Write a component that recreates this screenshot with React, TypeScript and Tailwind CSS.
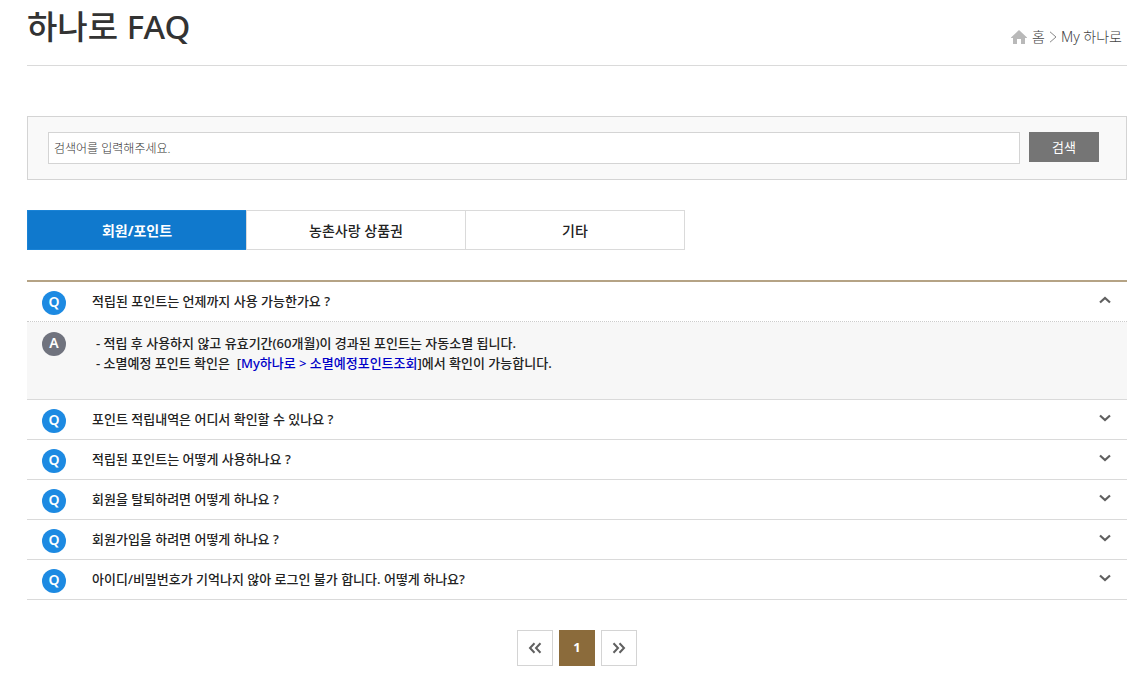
import React, { useState } from "react";

interface FaqItem {
  id: number;
  question: string;
  answer?: React.ReactNode;
}

const tabs = ["회원/포인트", "농촌사랑 상품권", "기타"];

const faqs: FaqItem[] = [
  {
    id: 1,
    question: "적립된 포인트는 언제까지 사용 가능한가요 ?",
    answer: (
      <>
        <p>- 적립 후 사용하지 않고 유효기간(60개월)이 경과된 포인트는 자동소멸 됩니다.</p>
        <p>
          - 소멸예정 포인트 확인은&nbsp; [
          <a href="#point" className="text-[#0000c8]">
            My하나로 &gt; 소멸예정포인트조회
          </a>
          ]에서 확인이 가능합니다.
        </p>
      </>
    ),
  },
  { id: 2, question: "포인트 적립내역은 어디서 확인할 수 있나요 ?" },
  { id: 3, question: "적립된 포인트는 어떻게 사용하나요 ?" },
  { id: 4, question: "회원을 탈퇴하려면 어떻게 하나요 ?" },
  { id: 5, question: "회원가입을 하려면 어떻게 하나요 ?" },
  { id: 6, question: "아이디/비밀번호가 기억나지 않아 로그인 불가 합니다. 어떻게 하나요?" },
];

const Mark: React.FC<{ type: "Q" | "A" }> = ({ type }) => (
  <span
    className={`flex size-6 shrink-0 items-center justify-center rounded-full pb-0.5 text-sm leading-5 font-semibold text-white ${
      type === "Q" ? "bg-[#1d8ae2]" : "bg-[#70737e]"
    }`}
  >
    {type}
  </span>
);

const Chevron: React.FC<{ open: boolean }> = ({ open }) => (
  <svg width="12" height="8" viewBox="0 0 12 8" fill="none" stroke="#606060" strokeWidth="2.2" className="shrink-0">
    <path d={open ? "M1 6.5 6 2l5 4.5" : "M1 1.5 6 6l5-4.5"} />
  </svg>
);

const FaqRow: React.FC<{ item: FaqItem; open: boolean; onToggle: () => void }> = ({ item, open, onToggle }) => {
  const expanded = open && !!item.answer;
  return (
    <li>
      <h2>
        <button
          type="button"
          onClick={onToggle}
          aria-expanded={open}
          className={`flex h-10 w-full items-start border-b pr-4 pl-[15px] text-left ${
            expanded ? "border-dotted border-[#cccccc]" : "border-[#dadada]"
          }`}
        >
          <span className="pt-[9px]">
            <Mark type="Q" />
          </span>
          <span className="flex-1 pl-[26px] leading-[38px]">{item.question}</span>
          <span className="pt-[14px]">
            <Chevron open={open} />
          </span>
        </button>
      </h2>
      {expanded && (
        <div className="flex items-start border-b border-[#dadada] bg-[#f7f7f7] pt-[10px] pb-[26px] pl-[15px]">
          <Mark type="A" />
          <div className="pt-px pl-[30px] leading-5">{item.answer}</div>
        </div>
      )}
    </li>
  );
};

const App: React.FC = () => {
  const [tab, setTab] = useState(0);
  const [openId, setOpenId] = useState(1);
  const [keyword, setKeyword] = useState("");

  return (
    <main className="bg-white pt-[3px] pr-[11px] pb-5 pl-[27px] font-['Noto_Sans','Noto_Sans_CJK_KR',sans-serif] text-[13px] font-medium text-[#222222]">
      <header className="flex items-start justify-between border-b border-[#dadada] pb-[14px]">
        <h1 className="text-[33px] leading-[48px] text-[#333333]">하나로 FAQ</h1>
        <nav aria-label="위치" className="flex items-center gap-1 pt-6 pr-[5px] text-sm font-light text-[#444444]">
          <svg width="16" height="14" viewBox="0 0 16 14" fill="#b9b9b9" className="mr-px">
            <path d="M8 0 0 7.5V8h2v6h4V9h4v5h4V8h2v-.5L8 0Z" />
          </svg>
          <a href="#home">홈</a>
          <svg width="8" height="12" viewBox="0 0 8 12" fill="none" stroke="#888888">
            <path d="M1 .8 7 6l-6 5.2" />
          </svg>
          <a href="#my">My 하나로</a>
        </nav>
      </header>

      <form
        onSubmit={(e) => e.preventDefault()}
        className="mt-[50px] flex items-start gap-[9px] border border-[#d4d4d4] bg-[#f9f9f9] py-[15px] pr-[27px] pl-5"
      >
        <input
          type="text"
          aria-label="검색어"
          value={keyword}
          onChange={(e) => setKeyword(e.target.value)}
          placeholder="검색어를 입력해주세요."
          className="h-8 min-w-0 flex-1 border border-[#d4d4d4] bg-white px-[5px] text-xs font-light placeholder:text-[#333333]"
        />
        <button type="submit" className="h-[30px] w-[70px] bg-[#757575] pt-px text-[13px] font-normal text-white">
          검색
        </button>
      </form>

      <div role="tablist" className="mt-[30px] flex w-3/5 text-sm">
        {tabs.map((name, i) => (
          <button
            key={name}
            type="button"
            role="tab"
            aria-selected={tab === i}
            onClick={() => setTab(i)}
            className={`-ml-px h-10 w-1/3 shrink-0 border pt-0.5 first:ml-0 ${
              tab === i ? "border-[#1a83d6] bg-[#1079cd] font-bold text-white" : "border-[#dadada] bg-white"
            }`}
          >
            {name}
          </button>
        ))}
      </div>

      <ul className="mt-[30px] border-t-2 border-[#b5a385]">
        {faqs.map((item) => (
          <FaqRow
            key={item.id}
            item={item}
            open={openId === item.id}
            onToggle={() => setOpenId(openId === item.id ? 0 : item.id)}
          />
        ))}
      </ul>

      <nav aria-label="페이지" className="mt-[30px] flex justify-center gap-1.5">
        <button
          type="button"
          aria-label="이전"
          className="flex size-9 items-center justify-center border border-[#d4d4d4]"
        >
          <svg width="14" height="12" viewBox="0 0 14 12" fill="none" stroke="#606060" strokeWidth="2">
            <path d="M6.5 1.2 2 6l4.5 4.8M12.5 1.2 8 6l4.5 4.8" />
          </svg>
        </button>
        <button type="button" aria-current="page" className="size-9 bg-[#8b6b3b] font-bold text-white">
          1
        </button>
        <button
          type="button"
          aria-label="다음"
          className="flex size-9 items-center justify-center border border-[#d4d4d4]"
        >
          <svg width="14" height="12" viewBox="0 0 14 12" fill="none" stroke="#606060" strokeWidth="2">
            <path d="M1.5 1.2 6 6l-4.5 4.8M7.5 1.2 12 6l-4.5 4.8" />
          </svg>
        </button>
      </nav>
    </main>
  );
};

export default App;
